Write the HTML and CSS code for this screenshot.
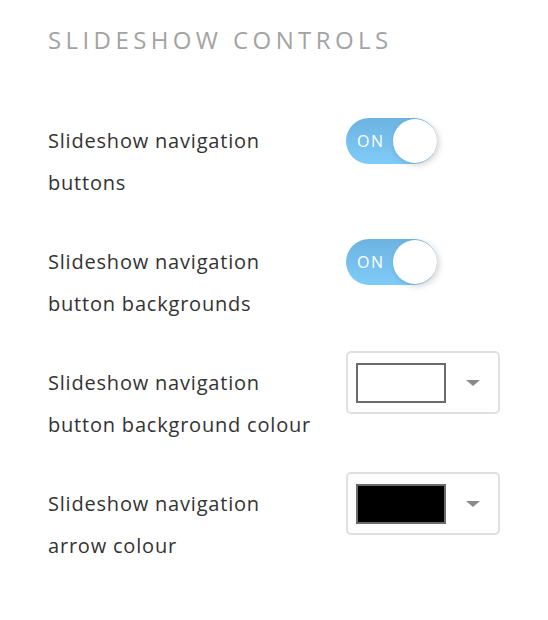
FILE: index.html
```html
<!DOCTYPE html>
<html>
<head>
<meta charset="utf-8">
<link rel="stylesheet" href="styles.css">
</head>
<body>
<div class="panel">
  <h2 class="title">SLIDESHOW CONTROLS</h2>
  <div class="rows">
    <div class="row">
      <div class="label">Slideshow navigation<br>buttons</div>
      <div class="toggle"><span class="toggle-text">ON</span><span class="knob"></span></div>
    </div>
    <div class="row">
      <div class="label">Slideshow navigation<br>button backgrounds</div>
      <div class="toggle"><span class="toggle-text">ON</span><span class="knob"></span></div>
    </div>
    <div class="row">
      <div class="label">Slideshow navigation<br>button background colour</div>
      <div class="picker"><span class="swatch swatch-white"></span><span class="caret"></span></div>
    </div>
    <div class="row">
      <div class="label">Slideshow navigation<br>arrow colour</div>
      <div class="picker"><span class="swatch swatch-black"></span><span class="caret"></span></div>
    </div>
  </div>
</div>
</body>
</html>
```

FILE: styles.css
```css
html, body {
  margin: 0;
  padding: 0;
  background: #fff;
}
.panel {
  padding: 24px 48px 0 48px;
  font-family: "Open Sans", Lato, sans-serif;
}
.title {
  margin: 0;
  font-size: 24px;
  line-height: 32px;
  font-weight: 400;
  letter-spacing: 4.4px;
  color: #a3a3a3;
}
.rows {
  margin-top: 53px;
  display: flex;
  flex-direction: column;
  gap: 26px;
}
.row {
  display: flex;
  align-items: flex-start;
}
.label {
  flex: 0 0 298px;
  padding-top: 11px;
  font-size: 20px;
  line-height: 42px;
  letter-spacing: 0.8px;
  color: #333;
}
.toggle {
  margin-top: 9px;
  position: relative;
  width: 91px;
  height: 46px;
  border-radius: 23px;
  background: linear-gradient(#6db3e2, #7fcbf8);
  display: flex;
  align-items: center;
}
.toggle-text {
  padding-left: 11px;
  color: #fff;
  font-size: 16px;
  letter-spacing: 1.6px;
}
.knob {
  position: absolute;
  right: 0;
  top: 1px;
  width: 44px;
  height: 44px;
  border-radius: 50%;
  background: #fff;
  box-shadow: 2px 2px 6px rgba(0,0,0,0.18);
}
.picker {
  box-sizing: border-box;
  width: 156px;
  height: 63px;
  border: 2px solid #e0e0e0;
  border-radius: 5px;
  display: flex;
  align-items: center;
  padding-left: 8px;
}
.swatch {
  box-sizing: border-box;
  width: 90px;
  height: 40px;
  border: 2px solid #6b6b6b;
}
.swatch-white { background: #fff; }
.swatch-black { background: #000; }
.caret {
  margin-left: 20px;
  width: 0;
  height: 0;
  border-left: 7px solid transparent;
  border-right: 7px solid transparent;
  border-top: 6px solid #8a8a8a;
}
```
